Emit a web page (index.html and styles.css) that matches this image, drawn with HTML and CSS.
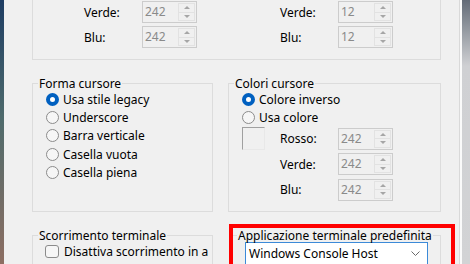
FILE: index.html
```html
<!DOCTYPE html>
<html lang="it">
<head>
  <meta charset="UTF-8" />
  <meta name="viewport" content="width=device-width, initial-scale=1" />
  <title>Proprietà - Terminale</title>
  <link rel="stylesheet" href="styles.css">
</head>
<body>
  <div class="screen">
    <div class="desk-left"></div>

    <div class="dialog">
      <!-- gruppo colori terminale, la parte alta è fuori dallo schermo -->
      <div class="group-cut">
        <div class="color-cols">
          <div class="spin-col">
            <div class="spin-row">
              <span class="spin-label">Verde:</span>
              <div class="spin"><span class="spin-val">242</span><span class="spin-btns"><span class="spin-btn"><i class="up"></i></span><span class="spin-btn"><i class="down"></i></span></span></div>
            </div>
            <div class="spin-row">
              <span class="spin-label">Blu:</span>
              <div class="spin"><span class="spin-val">242</span><span class="spin-btns"><span class="spin-btn"><i class="up"></i></span><span class="spin-btn"><i class="down"></i></span></span></div>
            </div>
          </div>
          <div class="spin-col">
            <div class="spin-row">
              <span class="spin-label">Verde:</span>
              <div class="spin"><span class="spin-val">12</span><span class="spin-btns"><span class="spin-btn"><i class="up"></i></span><span class="spin-btn"><i class="down"></i></span></span></div>
            </div>
            <div class="spin-row">
              <span class="spin-label">Blu:</span>
              <div class="spin"><span class="spin-val">12</span><span class="spin-btns"><span class="spin-btn"><i class="up"></i></span><span class="spin-btn"><i class="down"></i></span></span></div>
            </div>
          </div>
        </div>
      </div>

      <div class="pair">
        <fieldset class="group">
          <legend>Forma cursore</legend>
          <div class="group-body options">
            <label class="option"><span class="radio on"></span>Usa stile legacy</label>
            <label class="option"><span class="radio"></span>Underscore</label>
            <label class="option"><span class="radio"></span>Barra verticale</label>
            <label class="option"><span class="radio"></span>Casella vuota</label>
            <label class="option"><span class="radio"></span>Casella piena</label>
          </div>
        </fieldset>

        <fieldset class="group">
          <legend>Colori cursore</legend>
          <div class="group-body">
            <div class="options">
              <label class="option"><span class="radio on"></span>Colore inverso</label>
              <label class="option"><span class="radio"></span>Usa colore</label>
            </div>
            <div class="cursor-color">
              <div class="swatch"></div>
              <div class="spin-col spin-col-loose">
                <div class="spin-row">
                  <span class="spin-label">Rosso:</span>
                  <div class="spin"><span class="spin-val">242</span><span class="spin-btns"><span class="spin-btn"><i class="up"></i></span><span class="spin-btn"><i class="down"></i></span></span></div>
                </div>
                <div class="spin-row">
                  <span class="spin-label">Verde:</span>
                  <div class="spin"><span class="spin-val">242</span><span class="spin-btns"><span class="spin-btn"><i class="up"></i></span><span class="spin-btn"><i class="down"></i></span></span></div>
                </div>
                <div class="spin-row">
                  <span class="spin-label">Blu:</span>
                  <div class="spin"><span class="spin-val">242</span><span class="spin-btns"><span class="spin-btn"><i class="up"></i></span><span class="spin-btn"><i class="down"></i></span></span></div>
                </div>
              </div>
            </div>
          </div>
        </fieldset>
      </div>

      <div class="pair pair-bottom">
        <fieldset class="group">
          <legend>Scorrimento terminale</legend>
          <div class="group-body">
            <label class="option option-check"><span class="check"></span>Disattiva scorrimento in a</label>
          </div>
        </fieldset>

        <div class="highlight-wrap">
          <fieldset class="group group-app">
            <legend>Applicazione terminale predefinita</legend>
            <div class="group-body">
              <div class="select">
                <span>Windows Console Host</span>
                <svg width="9" height="6" viewBox="0 0 9 6"><polyline points="0.5,0.5 4.5,4.5 8.5,0.5" fill="none" stroke="#6a6a6a" stroke-width="1"/></svg>
              </div>
            </div>
          </fieldset>
          <div class="highlight"></div>
        </div>
      </div>
    </div>

    <div class="frame-right"></div>
    <div class="desk-right"></div>
  </div>
</body>
</html>
```

FILE: styles.css
```css
body {
  margin: 0;
  font-family: "Noto Sans", "Segoe UI", sans-serif;
  font-size: 12px;
  color: #000;
  background: #f0f0f0;
}
.screen {
  display: flex;
  height: 264px;
  overflow: hidden;
}
.desk-left {
  width: 4px;
  background: linear-gradient(#1e3d63, #4f6b6c 45%, #8d6e62);
}
.dialog {
  flex: 1;
  background: #f0f0f0;
  padding-left: 28px;
  border-right: 1px solid #d9d9d9;
}
.frame-right {
  width: 2px;
  background: #fafafa;
}
.desk-right {
  width: 8px;
  background: linear-gradient(#646c78, #8e949c 10%, #cfd0d3 25%, #d2d3d5);
}

/* gruppi */
.group-cut {
  width: 409px;
  box-sizing: border-box;
  border: 1px solid #dcdcdc;
  border-top: none;
  padding: 1px 0 11px 51px;
}
.group {
  margin: 0;
  padding: 0 0 10px 0;
  border: 1px solid #dcdcdc;
  min-width: 0;
}
.group legend {
  margin-left: 5px;
  padding: 0 1px;
  line-height: 15px;
  white-space: nowrap;
}
.group-body {
  padding-left: 13px;
}
.pair {
  display: grid;
  grid-template-columns: 181px 213px;
  column-gap: 15px;
  margin-top: 16px;
}
.pair-bottom {
  margin-top: 16px;
}

/* spin */
.color-cols {
  display: flex;
  gap: 83px;
}
.spin-col {
  display: flex;
  flex-direction: column;
  gap: 3px;
  width: 113px;
}
.spin-col-loose {
  gap: 3.5px;
}
.spin-row {
  display: flex;
  align-items: center;
  height: 22px;
}
.spin-label {
  width: 58px;
}
.spin {
  display: flex;
  width: 55px;
  height: 22px;
  box-sizing: border-box;
  border: 1px solid #cccccc;
  background: #f0f0f0;
}
.spin-val {
  flex: 1;
  padding-left: 2px;
  line-height: 20px;
  color: #8a8a8a;
}
.spin-btns {
  width: 15px;
  display: flex;
  flex-direction: column;
  margin: 1px 1px 1px 0;
  border: 1px solid #e2e2e2;
}
.spin-btn {
  flex: 1;
  display: flex;
  align-items: center;
  justify-content: center;
}
.spin-btn + .spin-btn {
  border-top: 1px solid #e2e2e2;
}
.spin-btn i {
  width: 0;
  height: 0;
  border-left: 3px solid transparent;
  border-right: 3px solid transparent;
}
.spin-btn .up {
  border-bottom: 3px solid #a6a6a6;
}
.spin-btn .down {
  border-top: 3px solid #a6a6a6;
}

/* opzioni */
.options {
  margin-top: -1px;
}
.option {
  display: flex;
  align-items: center;
  gap: 4px;
  height: 18.3px;
}
.radio {
  width: 13px;
  height: 13px;
  box-sizing: border-box;
  border-radius: 50%;
  border: 1px solid #8b8b8b;
  background: #f6f6f6;
}
.radio.on {
  border: 4px solid #0060c0;
  background: #fff;
}
.option-check {
  margin-left: -1px;
  gap: 5px;
  height: 18px;
}
.check {
  width: 14px;
  height: 13px;
  box-sizing: border-box;
  border: 1px solid #8b8b8b;
  border-radius: 3px;
  background: #f6f6f6;
}

.cursor-color {
  display: flex;
  gap: 15px;
  margin-top: 1px;
}
.swatch {
  width: 23px;
  height: 23px;
  margin-top: -1px;
  box-sizing: border-box;
  border: 1px solid #e8e8e8;
  border-top-color: #a0a0a0;
  border-left-color: #a0a0a0;
  background: #f0f0f0;
}

/* applicazione predefinita */
.highlight-wrap {
  position: relative;
}
.group-app {
  margin-left: 2px;
  height: 60px;
}
.group-app legend {
  margin-left: 6px;
}
.group-app .group-body {
  padding-left: 14px;
}
.select {
  display: flex;
  align-items: center;
  justify-content: space-between;
  width: 183px;
  height: 24px;
  margin-top: -1px;
  box-sizing: border-box;
  border: 1px solid #3c8ad8;
  background: #fff;
  padding: 0 7px 0 3px;
  font-size: 12px;
}
.highlight {
  position: absolute;
  top: -4px;
  left: 1px;
  right: -14px;
  bottom: -40px;
  border: 4px solid #ff0000;
}
```
